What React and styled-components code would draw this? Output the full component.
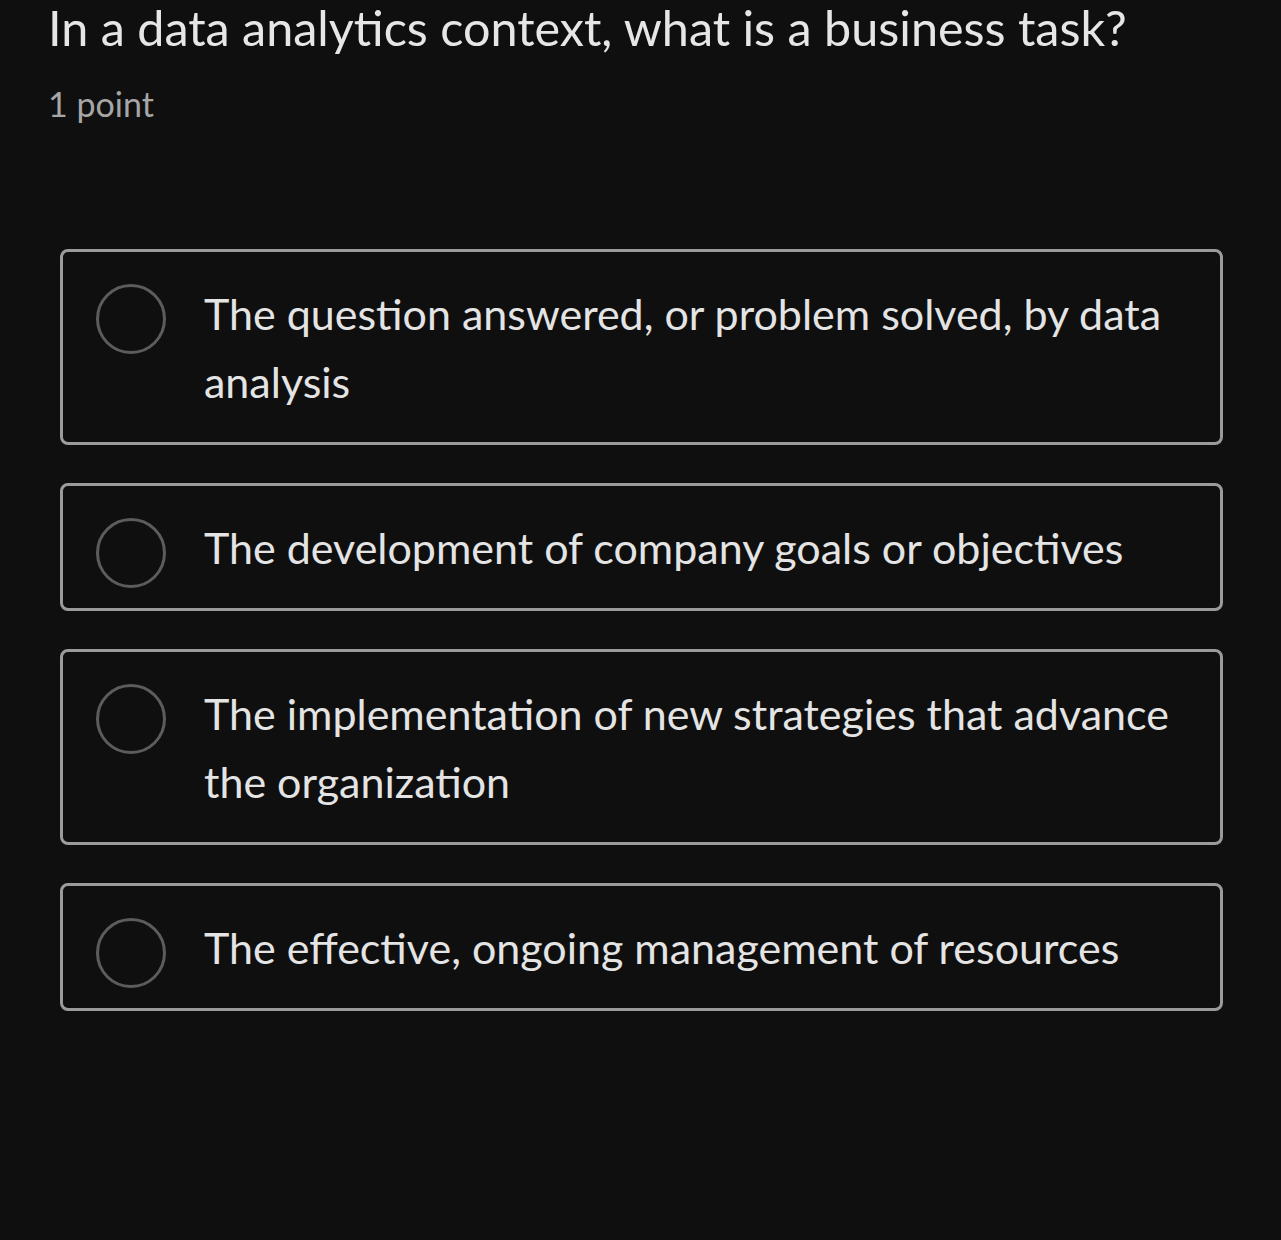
import styled, { createGlobalStyle } from 'styled-components';

const GlobalStyle = createGlobalStyle`
  html, body {
    margin: 0;
    background: #0f0f0f;
  }
  body {
    font-family: Lato, "Noto Sans", sans-serif;
    color: #e8e8e8;
  }
`;

const Page = styled.div`
  min-height: 1240px;
  background: #0f0f0f;
  padding: 0 58px 0 48px;
  box-sizing: border-box;
`;

const Title = styled.h1`
  margin: 0;
  font-size: 48.5px;
  font-weight: 400;
  line-height: 55px;
  color: #e6e6e6;
`;

const Points = styled.div`
  margin-top: 29px;
  font-size: 34px;
  line-height: 40px;
  color: #a6a6a6;
`;

const Options = styled.div`
  margin: 125px 0 0 12px;
  display: flex;
  flex-direction: column;
  gap: 38px;
`;

const Option = styled.label`
  display: flex;
  align-items: flex-start;
  gap: 38px;
  padding: 28px 30px 26px 33px;
  border: 3px solid #9b9b9b;
  border-radius: 8px;
  cursor: pointer;
`;

const Radio = styled.span`
  flex: none;
  width: 64px;
  height: 64px;
  margin: 4px 0 -6px;
  border: 3px solid #5c5c5c;
  border-radius: 50%;
`;

const OptionText = styled.span`
  font-size: 43px;
  line-height: 68px;
  color: #e4e4e4;
`;

const answers = [
  'The question answered, or problem solved, by data analysis',
  'The development of company goals or objectives',
  'The implementation of new strategies that advance the organization',
  'The effective, ongoing management of resources',
];

const App = () => {
  return (
    <Page>
      <GlobalStyle />
      <Title>In a data analytics context, what is a business task?</Title>
      <Points>1 point</Points>
      <Options>
        {answers.map((a) => (
          <Option key={a}>
            <Radio />
            <OptionText>{a}</OptionText>
          </Option>
        ))}
      </Options>
    </Page>
  );
};
export default App;
